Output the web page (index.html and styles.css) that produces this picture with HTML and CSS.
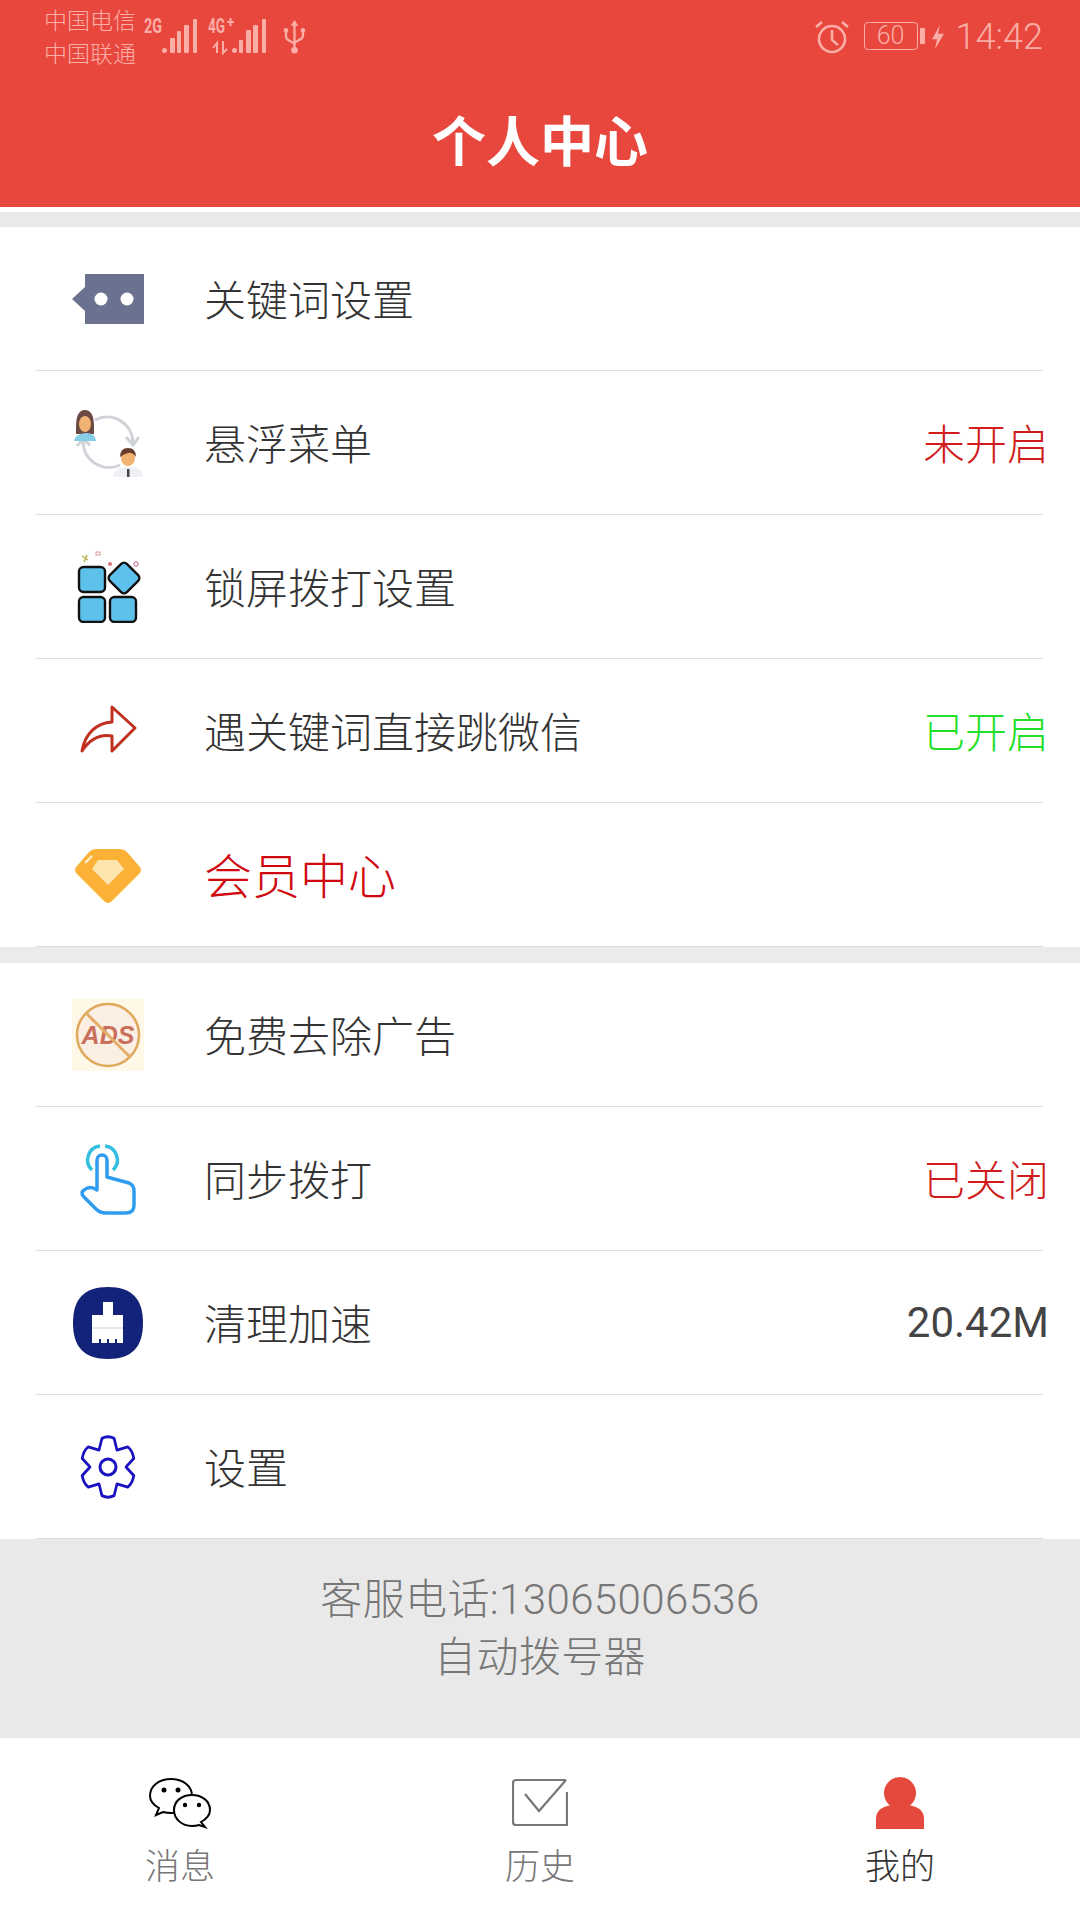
FILE: index.html
```html
<!DOCTYPE html>
<html lang="zh-CN">
<head>
  <meta charset="UTF-8" />
  <meta name="viewport" content="width=device-width, initial-scale=1.0"/>
  <title>个人中心</title>
  <link rel="stylesheet" href="styles.css">
</head>
<body>
  <div class="page">
    <header class="header">
      <div class="status">
        <div class="carrier">中国电信<br>中国联通</div>
        <svg class="sig sig-a" width="53" height="36" viewBox="0 0 53 36">
          <text class="sig-text" x="0" y="15" textLength="18" lengthAdjust="spacingAndGlyphs">2G</text>
          <rect x="18" y="30" width="5" height="5" rx="2.500"/>
          <rect x="26" y="20" width="5" height="15" rx="1"/>
          <rect x="33" y="13" width="4" height="22" rx="1"/>
          <rect x="40" y="7" width="5" height="28" rx="1"/>
          <rect x="49" y="1" width="4" height="34" rx="1"/>
        </svg>
        <svg class="sig sig-b" width="60" height="36" viewBox="0 0 60 36">
          <text class="sig-text" x="0" y="15" textLength="17" lengthAdjust="spacingAndGlyphs">4G</text>
          <path d="M19 4h7M22.500 0v8" stroke="#fbaea6" stroke-width="2"/>
          <path d="M9 35V25l-4 5M15 23v12l4-4" fill="none" stroke="#fbaea6" stroke-width="2"/>
          <rect x="24" y="30" width="5" height="5" rx="2.500"/>
          <rect x="31" y="22" width="4" height="13" rx="1"/>
          <rect x="38" y="12" width="5" height="23" rx="1"/>
          <rect x="45" y="7" width="5" height="28" rx="1"/>
          <rect x="54" y="1" width="4" height="34" rx="1"/>
        </svg>
        <svg class="usb" width="23" height="34" viewBox="0 0 22 36" fill="none" stroke="#fbaea6" stroke-width="2.400">
          <path d="M11 4v28"/>
          <path d="M11 0l-4 6h8z" fill="#fbaea6" stroke="none"/>
          <path d="M2 12v5q0 4 4 5l5 3"/>
          <path d="M20 12v4q0 4-4 5l-5 3"/>
          <circle cx="11" cy="32" r="3.500" fill="#fbaea6" stroke="none"/>
          <circle cx="2" cy="11" r="2.400" fill="#fbaea6" stroke="none"/>
          <circle cx="20" cy="11" r="2.400" fill="#fbaea6" stroke="none"/>
        </svg>
        <div class="status-right">
          <svg class="alarm" width="34" height="34" viewBox="0 0 34 34" fill="none" stroke="#fbaea6" stroke-width="2.600">
            <circle cx="17" cy="19" r="13"/>
            <path d="M17 10v10l6 5"/>
            <path d="M1 7l6-5M33 7l-6-5"/>
          </svg>
          <div class="battery">60<span class="nub"></span></div>
          <svg class="bolt" width="12" height="24" viewBox="0 0 12 22" preserveAspectRatio="none">
            <path d="M8 0L0 13h5l-2 9 9-14H6z" fill="#fbaea6"/>
          </svg>
          <div class="time">14:42</div>
        </div>
      </div>
      <h1 class="title">个人中心</h1>
    </header>
    <div class="gap-top"></div>

    <section class="group">
      <div class="row">
        <svg class="icon" viewBox="0 0 72 72">
          <path d="M13 11h59v50H13V48L0 36l13-12z" fill="#6b7290"/>
          <circle cx="29" cy="36" r="6.500" fill="#fff"/>
          <circle cx="55" cy="36" r="6.500" fill="#fff"/>
        </svg>
        <span class="label">关键词设置</span>
      </div>
      <div class="row">
        <svg class="icon" viewBox="0 0 72 72" fill="none">
          <path d="M23 13A26 26 0 0 1 61 36M48 58A26 26 0 0 1 11 34" stroke="#cfd3d8" stroke-width="3"/>
          <path d="M54 30l7 8 6-8M5 39l6-7 7 6" stroke="#cfd3d8" stroke-width="3"/>
          <path d="M4 20Q4 3 13 3T22 20V27H4z" fill="#6b4a44"/>
          <ellipse cx="13" cy="17" rx="6" ry="8" fill="#f2b274"/>
          <path d="M2 34Q3 27 13 26T24 34z" fill="#86cde6"/>
          <path d="M41 70Q41 61 56 60T71 70z" fill="#eef0f6"/>
          <ellipse cx="56" cy="51" rx="7" ry="8" fill="#f2b274"/>
          <path d="M48 50Q48 41 56 41T64 50Q60 45 56 46T48 50z" fill="#6c3f2c"/>
          <rect x="55" y="62" width="2.500" height="8" fill="#444"/>
        </svg>
        <span class="label">悬浮菜单</span>
        <span class="value red">未开启</span>
      </div>
      <div class="row">
        <svg class="icon" viewBox="0 0 72 72">
          <rect x="7" y="16" width="26" height="25" rx="4.500" fill="#5dc1ec" stroke="#111" stroke-width="2.400"/>
          <rect x="7" y="46" width="26" height="25" rx="4.500" fill="#5dc1ec" stroke="#111" stroke-width="2.400"/>
          <rect x="38" y="46" width="26" height="25" rx="4.500" fill="#5dc1ec" stroke="#111" stroke-width="2.400"/>
          <rect x="40" y="15" width="24" height="24" rx="4" transform="rotate(45 52 27)" fill="#5dc1ec" stroke="#111" stroke-width="2.400"/>
          <circle cx="38" cy="13" r="2" fill="#d9757a"/>
          <circle cx="64" cy="13" r="2.200" fill="none" stroke="#c0548a"/>
          <path d="M10 5l6 4M15 4l-3 7" stroke="#b9b44a" stroke-width="1.500"/>
          <rect x="24" y="1" width="4" height="3" fill="none" stroke="#d9959a"/>
        </svg>
        <span class="label">锁屏拨打设置</span>
      </div>
      <div class="row">
        <svg class="icon" viewBox="0 0 72 72">
          <path d="M10 56C13 38 25 28 40 27V12L63 33 40 56V41C28 39 18 44 10 56Z" fill="none" stroke="#c0301f" stroke-width="3" stroke-linejoin="round"/>
        </svg>
        <span class="label">遇关键词直接跳微信</span>
        <span class="value green">已开启</span>
      </div>
      <div class="row">
        <svg class="icon" viewBox="0 0 72 72">
          <path d="M24 10H48Q52 10 55 13L67 27Q71 31 67 35L40 62Q36 66 32 62L5 35Q1 31 5 27L17 13Q20 10 24 10Z" fill="#fbb135"/>
          <path d="M26 21H45L52 30 36 46 20 30z" fill="#fde3ae"/>
          <path d="M13 24l7-7" stroke="#fff3d6" stroke-width="2"/>
        </svg>
        <span class="label vip">会员中心</span>
      </div>
    </section>

    <div class="gap-mid"></div>

    <section class="group">
      <div class="row">
        <svg class="icon" viewBox="0 0 72 72">
          <rect width="72" height="72" fill="#fff8e6"/>
          <circle cx="36" cy="36" r="31" fill="#fbeee2" stroke="#dfa95c" stroke-width="2.500"/>
          <text class="ads" x="36" y="45">ADS</text>
          <path d="M14 14L58 58" stroke="#e3ae68" stroke-width="3"/>
        </svg>
        <span class="label">免费去除广告</span>
      </div>
      <div class="row">
        <svg class="icon" viewBox="0 0 72 72" fill="none">
          <path d="M20 27A14 14 0 0 1 28 3M33 3A14 14 0 0 1 41 27" stroke="#34bfe0" stroke-width="3.500"/>
          <path d="M25 47V17A5 5 0 0 1 35 17V34L57 40Q62 42 62 48V62Q62 70 54 70H34Q28 70 24 66L12 54Q8 50 12 47Q18 42 25 47Z" stroke="#2f9cf0" stroke-width="3.500" stroke-linejoin="round"/>
        </svg>
        <span class="label">同步拨打</span>
        <span class="value red">已关闭</span>
      </div>
      <div class="row">
        <svg class="icon" viewBox="0 0 72 72">
          <path d="M36 0C60 0 71 12 71 36S60 72 36 72 1 60 1 36 12 0 36 0Z" fill="#14237a"/>
          <path d="M31 15H41V28H51V56H20V28H31Z" fill="#fff"/>
          <path d="M20 41H51" stroke="#c9cde0" stroke-width="1"/>
          <path d="M28 52V56M36 52V56M44 52V56" stroke="#14237a" stroke-width="2"/>
        </svg>
        <span class="label">清理加速</span>
        <span class="value plain">20.42M</span>
      </div>
      <div class="row">
        <svg class="icon" viewBox="0 0 72 72" fill="none" stroke="#1a12c0" stroke-width="3">
          <g transform="translate(36 36) scale(.9 .98) translate(-36 -36)">
            <path d="M29.300 6.800Q36 3.500 42.800 6.800Q46 18.700 46 18.700Q46 18.700 57.900 15.500Q63 19 64.700 27.200Q56 36 56 36Q56 36 64.700 44.800Q63 53 57.900 56.500Q46 53.300 46 53.300Q46 53.300 42.800 65.200Q36 68.500 29.300 65.200Q26 53.300 26 53.300Q26 53.300 14.100 56.500Q9 53 7.300 44.800Q16 36 16 36Q16 36 7.300 27.200Q9 19 14.100 15.500Q26 18.700 26 18.700Q26 18.700 29.300 6.800Z" stroke-linejoin="round"/>
          </g>
          <circle cx="36" cy="36" r="8"/>
        </svg>
        <span class="label">设置</span>
      </div>
    </section>

    <footer class="contact">
      <div>客服电话:13065006536</div>
      <div>自动拨号器</div>
    </footer>

    <nav class="tabs">
      <div class="tab">
        <svg class="tab-icon" width="62" height="50" viewBox="0 0 62 50">
          <path d="M10 30Q1 25 1 18C1 8 10 1 22 1S43 8 43 18 34 35 22 35Q18 35 14 34L7 37Z" fill="#fff" stroke="#000" stroke-width="2"/>
          <path d="M52 44Q61 39 61 32C61 23 53 17 43 17S25 23 25 32 33 48 43 48Q47 48 50 47L56 49Z" fill="#fff" stroke="#000" stroke-width="2"/>
          <circle cx="15" cy="12" r="2.500"/>
          <circle cx="29" cy="12" r="2.500"/>
          <circle cx="36" cy="27" r="2.200"/>
          <circle cx="50" cy="27" r="2.200"/>
        </svg>
        <span>消息</span>
      </div>
      <div class="tab">
        <svg class="tab-icon" width="56" height="50" viewBox="0 0 56 50" fill="none" stroke="#777" stroke-width="2.200">
          <path d="M54 2H4Q1 2 1 5V44Q1 47 4 47H55V14"/>
          <path d="M13 16L27 33 54 2"/>
        </svg>
        <span>历史</span>
      </div>
      <div class="tab active">
        <svg class="tab-icon" width="48" height="52" viewBox="0 0 48 52" fill="#e5483c">
          <ellipse cx="24" cy="16" rx="16" ry="16"/>
          <path d="M0 52V42Q0 30 16 28H32Q48 30 48 42V52Z"/>
        </svg>
        <span>我的</span>
      </div>
    </nav>
  </div>
</body>
</html>
```

FILE: styles.css
```css
* {
  box-sizing: border-box;
}
body {
  margin: 0;
  font-family: Roboto, "Noto Sans CJK SC", sans-serif;
  background: white;
}
.page {
  width: 1080px;
  height: 1920px;
  overflow: hidden;
  display: flex;
  flex-direction: column;
}

/* top red bar */
.header {
  height: 207px;
  background: #e8473e;
  flex: none;
}
.status {
  height: 76px;
  padding: 5px 37px 0 44px;
  display: flex;
  align-items: flex-start;
  color: #fbaea6;
}
.carrier {
  font-size: 23px;
  line-height: 33px;
  width: 94px;
  white-space: nowrap;
  font-weight: 300;
}
.sig {
  fill: #fbaea6;
  overflow: visible;
}
.sig-text {
  font-family: Roboto, sans-serif;
  font-size: 20px;
  font-weight: 700;
}
.sig-a {
  margin: 13px 0 0 6px;
}
.sig-b {
  margin: 13px 0 0 11px;
}
.usb {
  margin: 15px 0 0 15px;
}
.status-right {
  margin-left: auto;
  display: flex;
  align-items: flex-start;
}
.alarm {
  margin-top: 15px;
}
.battery {
  position: relative;
  margin: 17px 0 0 15px;
  width: 54px;
  height: 28px;
  border: 1.5px solid #fbaea6;
  border-radius: 4px;
  font-size: 25px;
  font-weight: 300;
  line-height: 25px;
  text-align: center;
}
.nub {
  position: absolute;
  right: -8px;
  top: 5px;
  width: 5px;
  height: 16px;
  border-radius: 1px;
  background: #fbaea6;
}
.bolt {
  margin: 20px 0 0 14px;
}
.time {
  margin: 11px 0 0 12px;
  font-size: 36px;
  font-weight: 300;
  line-height: 42px;
}
.title {
  margin: 0;
  height: 131px;
  padding-top: 4px;
  line-height: 127px;
  text-align: center;
  color: white;
  font-size: 54px;
  font-weight: bold;
}

.gap-top {
  flex: none;
  height: 20px;
  border-top: 5px solid white;
  background: #e8e9eb;
}
.gap-mid {
  flex: none;
  height: 16px;
  background: #ebebeb;
}

/* menu rows */
.group {
  flex: none;
  background: white;
}
.row {
  height: 144px;
  margin: 0 37px 0 36px;
  padding-left: 36px;
  display: flex;
  align-items: center;
  border-bottom: 1px solid #dcdcdc;
}
.icon {
  flex: none;
  width: 72px;
  height: 72px;
  margin-right: 60px;
}
.label {
  margin-bottom: 3px;
  font-size: 42px;
  font-weight: 300;
  color: #333;
}
.vip {
  font-size: 48px;
  color: #d0080f;
}
.value {
  margin-left: auto;
  margin-right: -6px;
  margin-bottom: 3px;
  font-size: 42px;
  font-weight: 300;
}
.red {
  color: #d01c1c;
}
.green {
  color: #22e02a;
}
.plain {
  margin-bottom: 0;
  color: #444;
  font-weight: 400;
}
.ads {
  font-family: "Liberation Sans", sans-serif;
  font-size: 25px;
  font-weight: 700;
  font-style: italic;
  text-anchor: middle;
  fill: #c8705c;
}

/* grey contact strip */
.contact {
  flex: none;
  height: 199px;
  padding-top: 32px;
  background: #e9e9e9;
  color: #777;
  font-size: 42px;
  font-weight: 300;
  letter-spacing: 0.4px;
  line-height: 58px;
  text-align: center;
}

/* bottom tabs */
.tabs {
  flex: 1;
  display: grid;
  grid-template-columns: repeat(3, 360px);
  background: white;
}
.tab {
  padding-top: 39px;
  display: flex;
  flex-direction: column;
  align-items: center;
  color: #777;
  font-size: 35px;
  font-weight: 300;
}
.tab-icon {
  height: 52px;
  margin-bottom: 9px;
}
.tab.active {
  color: #333;
}
```
